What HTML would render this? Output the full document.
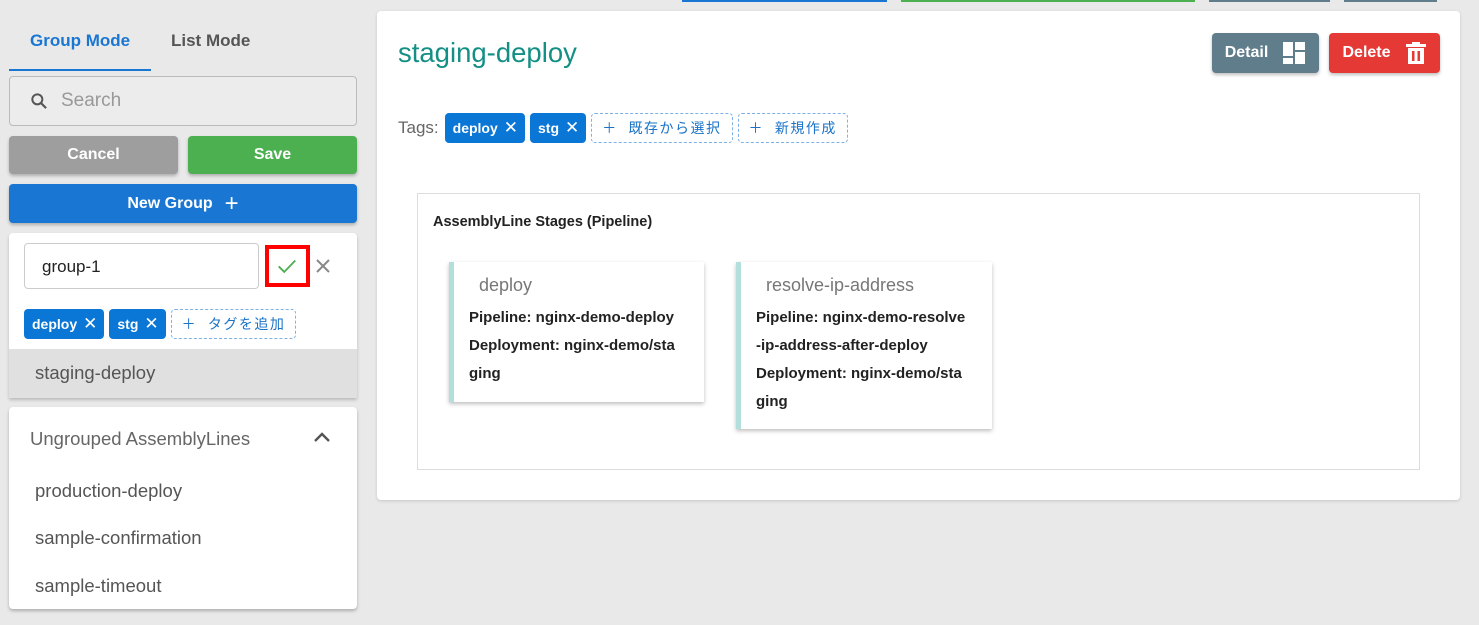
<!DOCTYPE html>
<html><head><meta charset="utf-8"><style>
*{box-sizing:border-box;margin:0;padding:0}
body{width:1479px;height:625px;background:#e9e9e9;font-family:"Liberation Sans","Noto Sans CJK JP",sans-serif;position:relative;overflow:hidden}
.a{position:absolute}
.btn{position:absolute;border-radius:4px;color:#fff;font-weight:bold;font-size:16px;display:flex;align-items:center;justify-content:center;box-shadow:0 2px 3px rgba(0,0,0,.25)}
.chip{display:inline-flex;align-items:center;background:#0a76d6;color:#fff;font-weight:bold;font-size:14px;height:30px;border-radius:4px;padding:0 7px 0 8px;margin-right:5px}
.chip .x{font-weight:normal;font-size:17px;margin-left:6px}
.dash{display:inline-flex;align-items:center;border:1px dashed #7fb0e6;color:#1a73c8;font-size:14px;height:30px;border-radius:4px;padding:0 10px;letter-spacing:1.5px}
.card{position:absolute;background:#fff;box-shadow:0 2px 4px rgba(0,0,0,.25);border-left:5px solid #b2dfdb}
.card h4{font-weight:normal;color:#777;font-size:18px;margin:13px 0 0 25px}
.card p{font-weight:bold;font-size:15px;color:#222;margin-left:15px;line-height:28px}
.li{font-size:18.5px;color:#555}
</style></head><body>
<div class="a" style="left:682px;top:0;width:205px;height:2px;background:#1976d2"></div>
<div class="a" style="left:901px;top:0;width:294px;height:2px;background:#4caf50"></div>
<div class="a" style="left:1209px;top:0;width:121px;height:2px;background:#607d8b"></div>
<div class="a" style="left:1344px;top:0;width:93px;height:2px;background:#607d8b"></div>

<div class="a" style="left:30px;top:31px;font-size:17px;color:#1976d2;font-weight:bold">Group Mode</div>
<div class="a" style="left:171px;top:31px;font-size:17px;color:#555;font-weight:bold">List Mode</div>
<div class="a" style="left:9px;top:69px;width:142px;height:2px;background:#1976d2"></div>
<div class="a" style="left:9px;top:76px;width:348px;height:50px;border:1px solid #bbb;border-radius:4px;background:#ececec"></div>
<svg class="a" style="left:29px;top:91px" width="20" height="20" viewBox="0 0 24 24"><circle cx="10" cy="10" r="6" fill="none" stroke="#555" stroke-width="2.4"/><path d="M14.5 14.5l6 6" stroke="#555" stroke-width="2.6"/></svg>
<div class="a" style="left:61px;top:90px;font-size:19px;color:#999">Search</div>
<div class="btn" style="left:9px;top:136px;width:169px;height:38px;background:#9e9e9e">Cancel</div>
<div class="btn" style="left:188px;top:136px;width:169px;height:38px;background:#4caf50">Save</div>
<div class="btn" style="left:9px;top:184px;width:348px;height:39px;background:#1976d2">New Group <span style="font-size:24px;font-weight:normal;margin-left:12px">+</span></div>

<div class="a" style="left:9px;top:233px;width:348px;height:165px;background:#fff;border-radius:4px 4px 0 0;box-shadow:0 2px 3px rgba(0,0,0,.2)"></div>
<div class="a" style="left:24px;top:243px;width:235px;height:46px;border:1px solid #ccc;border-radius:4px;font-size:17px;color:#222;padding:13px 0 0 17px">group-1</div>
<div class="a" style="left:265px;top:245px;width:45px;height:42px;border:4px solid #f00"></div>
<svg class="a" style="left:276px;top:255px" width="22" height="22" viewBox="0 0 24 24"><path d="M3 12.5l6 6L21 6" fill="none" stroke="#4caf50" stroke-width="2"/></svg>
<svg class="a" style="left:315px;top:258px" width="16" height="16" viewBox="0 0 16 16"><path d="M2 2l12 12M14 2L2 14" stroke="#888" stroke-width="2"/></svg>
<div class="a" style="left:24px;top:309px;display:flex"><span class="chip">deploy<span class="x">✕</span></span><span class="chip">stg<span class="x">✕</span></span><span class="dash">＋ &nbsp;タグを追加</span></div>
<div class="a li" style="left:9px;top:349px;width:348px;height:49px;background:#e0e0e0;padding:13px 0 0 26px">staging-deploy</div>

<div class="a" style="left:9px;top:407px;width:348px;height:202px;background:#fff;border-radius:4px;box-shadow:0 2px 3px rgba(0,0,0,.25)"></div>
<div class="a" style="left:30px;top:428px;font-size:18.5px;color:#666">Ungrouped AssemblyLines</div>
<svg class="a" style="left:313px;top:430px" width="18" height="14" viewBox="0 0 18 14"><path d="M2 11l7-7 7 7" fill="none" stroke="#555" stroke-width="2.4"/></svg>
<div class="a li" style="left:35px;top:480px">production-deploy</div>
<div class="a li" style="left:35px;top:527px">sample-confirmation</div>
<div class="a li" style="left:35px;top:575px">sample-timeout</div>

<div class="a" style="left:377px;top:11px;width:1083px;height:489px;background:#fff;border-radius:4px;box-shadow:0 1px 3px rgba(0,0,0,.15)"></div>
<div class="a" style="left:398px;top:37px;font-size:27.5px;color:#148f85">staging-deploy</div>
<div class="btn" style="left:1212px;top:33px;width:107px;height:40px;background:#607d8b">Detail<svg style="margin-left:14px" width="24" height="24" viewBox="0 0 24 24"><path fill="#fff" d="M1 1h10v14H1zM13 1h10v8H13zM13 11h10v12H13zM1 17h10v6H1z"/></svg></div>
<div class="btn" style="left:1329px;top:33px;width:111px;height:40px;background:#e53935">Delete<svg style="margin-left:14px" width="22" height="24" viewBox="0 0 22 24"><path fill="#fff" d="M7 1h8v2h6v3H1V3h6zM3 7h16v16H3z"/><path fill="#e53935" d="M7 10h2.5v10H7zM12.5 10H15v10h-2.5z"/></svg></div>
<div class="a" style="left:398px;top:113px;display:flex;align-items:center"><span style="font-size:17px;color:#666;margin-right:6px">Tags:</span><span class="chip">deploy<span class="x">✕</span></span><span class="chip">stg<span class="x">✕</span></span><span class="dash" style="margin-right:5px">＋ &nbsp;既存から選択</span><span class="dash">＋ &nbsp;新規作成</span></div>

<div class="a" style="left:417px;top:193px;width:1003px;height:277px;border:1px solid #ddd"></div>
<div class="a" style="left:433px;top:214px;font-size:14.5px;font-weight:bold;color:#222">AssemblyLine Stages (Pipeline)</div>
<div class="card" style="left:449px;top:262px;width:255px;height:140px"><h4>deploy</h4><p style="margin-top:8px">Pipeline: nginx-demo-deploy<br>Deployment: nginx-demo/sta<br>ging</p></div>
<div class="card" style="left:736px;top:262px;width:256px;height:167px"><h4>resolve-ip-address</h4><p style="margin-top:8px">Pipeline: nginx-demo-resolve<br>-ip-address-after-deploy<br>Deployment: nginx-demo/sta<br>ging</p></div>
</body></html>
